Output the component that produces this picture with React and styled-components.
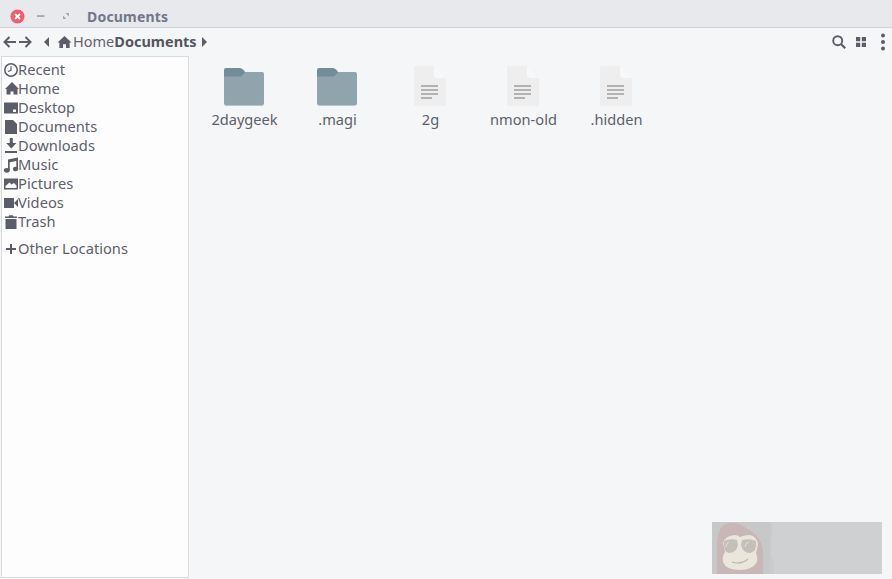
import React from "react";
import styled, { createGlobalStyle } from "styled-components";

const Global = createGlobalStyle`
  html, body { margin: 0; padding: 0; width: 892px; height: 579px; overflow: hidden; background: #f5f6f7; }
  * { box-sizing: border-box; }
`;
const Win = styled.div`
  position: relative; width: 892px; height: 579px; display: flex; flex-direction: column;
  font-family: "Noto Sans", "Open Sans", sans-serif; color: #5d5f6b; background: #f5f6f7; overflow: hidden;
`;
const TitleBar = styled.header`
  height: 28px; background: #e8e9ec; border-bottom: 1px solid #d2d3d6;
  display: flex; align-items: center; padding: 5px 0 0 10px;
`;
const WinButtons = styled.div`
  display: flex; align-items: center; gap: 12px; width: 77px;
`;
const Title = styled.div`
  font-size: 14px; font-weight: 700; color: #73758a; letter-spacing: .2px; line-height: 1; padding-top: 2px;
`;
const ToolBar = styled.div`
  height: 28px; display: flex; align-items: center; padding: 0 3px 0 3px;
`;
const NavGroup = styled.div`
  display: flex; align-items: center; gap: 3px; width: 40px;
`;
const Crumbs = styled.div`
  display: flex; align-items: center; flex: 1; font-size: 14.5px; line-height: 1;
`;
const CrumbLabels = styled.div`
  display: flex; align-items: center; padding-bottom: 2px;
`;
const Crumb = styled.span`
  font-weight: ${p => (p.$active ? 700 : 400)};
  color: ${p => (p.$active ? "#54565f" : "#62646f")};
`;
const Tools = styled.div`
  display: flex; align-items: center; gap: 9px;
`;
const Body = styled.div`
  flex: 1; display: flex; min-height: 0; padding-left: 1px;
`;
const Sidebar = styled.nav`
  width: 188px; height: 522px; background: #fdfdfd; border: 1px solid #d9dade; padding: 3px 0 0 1px;
  display: flex; flex-direction: column;
`;
const Row = styled.div`
  height: 19px; display: flex; align-items: center; font-size: 14.7px; line-height: 1; color: #5d5f6b;
  margin-top: ${p => (p.$gap ? "8px" : "0")};
`;
const RowIcon = styled.span`
  width: 15px; height: 16px; display: flex; align-items: center; justify-content: flex-start; flex: none;
`;
const Main = styled.main`
  flex: 1; display: flex; align-items: flex-start; padding: 10px 0 0 8px;
`;
const Tile = styled.div`
  width: 93px; display: flex; flex-direction: column; align-items: center;
`;
const TileIcon = styled.div`
  height: 40px; display: flex; align-items: center; justify-content: center;
`;
const TileLabel = styled.div`
  margin: 4px 0 0 2px; font-size: 14.6px; line-height: 18px; color: #5d5f6b; white-space: nowrap;
`;
const Watermark = styled.div`
  position: absolute; left: 712px; top: 522px; width: 170px; height: 52px; background: #cfd0d2; overflow: hidden;
`;

const C = "#5b5d69";
const I = ({ children }) => (
  <svg width="16" height="16" viewBox="0 0 16 16" fill={C} style={{ display: "block", flex: "none" }}>{children}</svg>
);

const icons = {
  recent: <I><circle cx="8" cy="8" r="6.2" fill="none" stroke={C} strokeWidth="1.5" /><path d="M8 4.3V8.3L5 9.5" fill="none" stroke={C} strokeWidth="1.2" /></I>,
  home: <I><path d="M9 1L16 8H14.5V13.5H10.5V10.5H7.5V13.5H3.5V8H2Z" /></I>,
  desktop: <I><path d="M1 2.5H15V13.5H1Z" /><path d="M10 9.5H13V12H10Z" fill="#fdfdfd" /></I>,
  documents: <I><path d="M2 1H10L14 5V15H2Z" /></I>,
  downloads: <I><path d="M6.8 0H9.8V5H13.5L8.3 10.5L3.2 5H6.8Z" /><path d="M2 13H14V15H2Z" /></I>,
  music: <I><path d="M5 2.5L15 .5V12H13.3V4L6.7 5.3V13.5H5Z" /><ellipse cx="3.8" cy="13.3" rx="2.9" ry="2.4" /><ellipse cx="12.6" cy="12" rx="2.6" ry="2.3" /></I>,
  pictures: <I><path fillRule="evenodd" d="M1 2.5H15V13.5H1ZM2.5 12H13.5V9.5L11 7L8.5 8.5L6.5 6.5L2.5 10Z" /></I>,
  videos: <I><path d="M1 3H11V13H1Z" /><path d="M11 8L15 4V12Z" /></I>,
  trash: <I><path d="M2.5 5H13.5V15H2.5Z" /><path d="M2 2.5H5.5L6.3 1.3H9.7L10.5 2.5H14V4H2Z" /></I>,
  other: <I><path d="M7 3H9V7H13V9H9V13H7V9H3V7H7Z" /></I>,
};

const places = [
  ["recent", "Recent"], ["home", "Home"], ["desktop", "Desktop"], ["documents", "Documents"],
  ["downloads", "Downloads"], ["music", "Music"], ["pictures", "Pictures"], ["videos", "Videos"], ["trash", "Trash"],
];

const Folder = () => (
  <svg width="40" height="40" viewBox="0 0 40 40" style={{ display: "block" }}>
    <path d="M0 4Q0 2 2 2H16Q17.5 2 19 3.5L22 7L18 11H0Z" fill="#738c9a" />
    <path d="M0 10.5H17L21.5 6H38Q40 6 40 8V37Q40 39 38 39H2Q0 39 0 37Z" fill="#90a4ad" />
    <path d="M0 37Q0 39 2 39H38Q40 39 40 37V37.6Q40 39.5 38 39.5H2Q0 39.5 0 37.6Z" fill="#7f939d" />
  </svg>
);
const FileIcon = () => (
  <svg width="32" height="40" viewBox="0 0 32 40" style={{ display: "block" }}>
    <path d="M1.5 0H20L32 12V38.5Q32 40 30.5 40H1.5Q0 40 0 38.5V1.5Q0 0 1.5 0Z" fill="#eeeeee" />
    <path d="M20 0L32 12H23Q20 12 20 9Z" fill="#f8f8f8" />
    <path d="M7 19H24V21H7ZM7 23H24V25H7ZM7 27H24V29H7ZM7 31H18V33H7Z" fill="#b2b2b2" />
  </svg>
);
const files = [["2daygeek", 1], [".magi", 1], ["2g", 0], ["nmon-old", 0], [".hidden", 0]];

export default function App() {
  return (
    <Win>
      <Global />
      <TitleBar>
        <WinButtons>
          <svg width="15" height="15" viewBox="0 0 15 15" style={{ display: "block" }}>
            <circle cx="7.5" cy="7.5" r="7" fill="#ef5f6b" />
            <path d="M5 5L10 10M10 5L5 10" stroke="#fff" strokeWidth="2" />
          </svg>
          <svg width="10" height="10" viewBox="0 0 10 10" style={{ display: "block" }}>
            <path d="M0 4.3H7.5V5.8H0Z" fill="#9a9ba3" />
          </svg>
          <svg width="10" height="10" viewBox="0 0 10 10" style={{ display: "block", marginLeft: 2 }}>
            <path d="M4.5 2H8V5.5ZM2 4.5L5.5 8H2Z" fill="#a5a6ac" />
          </svg>
        </WinButtons>
        <Title>Documents</Title>
      </TitleBar>
      <ToolBar>
        <NavGroup>
          <svg width="13" height="14" viewBox="0 0 13 14"><path d="M13 7H1.5M6.5 2L1.5 7L6.5 12" fill="none" stroke={C} strokeWidth="2" /></svg>
          <svg width="13" height="14" viewBox="0 0 13 14"><path d="M0 7H11.5M6.5 2L11.5 7L6.5 12" fill="none" stroke={C} strokeWidth="2" /></svg>
        </NavGroup>
        <Crumbs>
          <svg width="7" height="10" viewBox="0 0 7 10" style={{ marginRight: 7 }}><path d="M6 0V10L1 5Z" fill={C} /></svg>
          <svg width="15" height="14" viewBox="0 0 16 15" style={{ marginRight: 1 }} fill={C}><path d="M8 1L15.5 8H13.5V14H9.6V10H6.4V14H2.5V8H.5Z" /></svg>
          <CrumbLabels>
            <Crumb>Home</Crumb>
            <Crumb $active>Documents</Crumb>
          </CrumbLabels>
          <svg width="7" height="10" viewBox="0 0 7 10" style={{ marginLeft: 4 }}><path d="M1 0V10L6 5Z" fill={C} /></svg>
        </Crumbs>
        <Tools>
          <svg width="14" height="14" viewBox="0 0 14 14"><circle cx="5.7" cy="5.7" r="4.5" fill="none" stroke={C} strokeWidth="1.9" /><path d="M9 9L13.2 13.2" stroke={C} strokeWidth="2.2" /></svg>
          <svg width="13" height="12" viewBox="0 0 13 12" fill={C}><path d="M1 1H5.2V5.2H1ZM6.8 1H11V5.2H6.8ZM1 6.8H5.2V11H1ZM6.8 6.8H11V11H6.8Z" /></svg>
          <svg width="12" height="18" viewBox="0 0 12 18" fill={C}><circle cx="6" cy="2.5" r="2" /><circle cx="6" cy="9" r="2" /><circle cx="6" cy="15.5" r="2" /></svg>
        </Tools>
      </ToolBar>
      <Body>
        <Sidebar>
          {places.map(([k, label]) => (
            <Row key={k}><RowIcon>{icons[k]}</RowIcon>{label}</Row>
          ))}
          <Row $gap><RowIcon>{icons.other}</RowIcon>Other Locations</Row>
        </Sidebar>
        <Main>
          {files.map(([name, isDir]) => (
            <Tile key={name}>
              <TileIcon>{isDir ? <Folder /> : <FileIcon />}</TileIcon>
              <TileLabel>{name}</TileLabel>
            </Tile>
          ))}
        </Main>
      </Body>
      <Watermark>
        <svg width="170" height="52" viewBox="0 0 170 52" style={{ display: "block" }}>
          <path d="M0 0H58V52H0Z" fill="#c6c9c7" />
          <path d="M58 0H60V14Q58 18 60 24Q57 30 62 40V52H58Z" fill="#cacbca" />
          <path d="M5 52V24Q5 2 18 1Q26 0 34 6Q50 14 51 30V52Z" fill="#c9b6b6" />
          <path d="M11 21Q13 14 22 13Q26 13 28 15Q32 13 38 13Q45 15 46 22L44 31Q46 36 45 40Q40 48 28 48Q14 48 11 40Q10 34 13 30Z" fill="#eae6dc" />
          <path d="M12 19Q18 16 25 18L26 23Q24 31 17 31Q11 30 12 19ZM30 18Q38 16 44 19Q45 30 38 31Q31 31 29 23Z" fill="#c4bfb9" />
          <path d="M14 25Q14 21 17 20M33 25Q33 21 37 20" fill="none" stroke="#eae6dc" strokeWidth=".8" />
          <path d="M20 40Q29 43 36 37" fill="none" stroke="#bdb4a8" strokeWidth="1.2" />
        </svg>
      </Watermark>
    </Win>
  );
}
